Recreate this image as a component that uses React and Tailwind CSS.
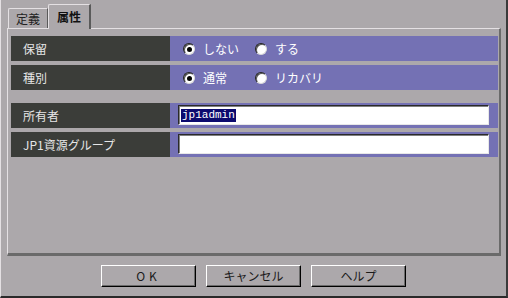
import React from "react";

const jp = { fontFamily: '"Noto Sans CJK JP", "Noto Sans", sans-serif' };

function Radio({ checked, label, width }) {
  return (
    <div className={`flex items-center ${width}`}>
      <span className="relative w-[12px] h-[12px] rounded-full bg-white border border-t-[#202020] border-l-[#202020] border-r-[#d8d8d8] border-b-[#d8d8d8] shadow-[inset_1px_1px_0_#555]">
        {checked && (
          <span className="absolute left-[3px] top-[3px] w-[5px] h-[5px] rounded-full bg-black" />
        )}
      </span>
      <span className="ml-[8px] text-[12px] text-white leading-none">{label}</span>
    </div>
  );
}

function Row({ label, children, className = "" }) {
  return (
    <div className={`flex h-[25px] ${className}`}>
      <div className="w-[159px] bg-[#3b3d39] flex items-center pl-[12px] text-[12px] text-[#e6e6e6]">
        {label}
      </div>
      <div className="flex-1 bg-[#7471b4] flex items-center">{children}</div>
    </div>
  );
}

function TextInput({ value }) {
  return (
    <div className="ml-[8px] mr-[9px] mt-[-1px] flex-1 h-[20px] bg-white border border-t-[#2a2a2a] border-l-[#2a2a2a] border-r-[#e8e8e8] border-b-[#e8e8e8] shadow-[inset_1px_1px_0_#808080] flex items-center pl-[2px]">
      {value && (
        <span
          className="bg-[#0c0a6e] text-white text-[11px] leading-[13px] px-[1px]"
          style={{ fontFamily: '"Liberation Mono", monospace' }}
        >
          {value}
        </span>
      )}
    </div>
  );
}

function Button({ children, spaced }) {
  return (
    <button
      className={`w-[95px] h-[22px] bg-[#aca8ab] border border-t-white border-l-white border-r-black border-b-black shadow-[inset_-1px_-1px_0_#6b6b6b] text-[12px] text-[#1a1a1a] ${spaced ? "tracking-[4px]" : ""}`}
    >
      {children}
    </button>
  );
}

export default function App() {
  return (
    <div
      className="w-[508px] h-[298px] bg-[#aca8ab] border-l border-l-[#e4e0e3] border-r-2 border-r-[#3a3a3a] border-b-2 border-b-[#2a2a2a] flex flex-col pl-[6px]"
      style={jp}
    >
      {/* Tabs */}
      <div className="h-[28px] flex items-end pl-[1px]">
        <div className="w-[40px] h-[20px] border-t border-l border-t-[#e4e0e3] border-l-[#e4e0e3] border-r border-r-[#5a5a5a] rounded-tl-[2px] flex items-center justify-center text-[12px] text-[#222]">
          定義
        </div>
        <div className="w-[43px] h-[25px] mb-[-1px] bg-[#aca8ab] relative z-10 border-t border-l border-t-[#e4e0e3] border-l-[#e4e0e3] border-r-2 border-r-[#5a5a5a] rounded-tl-[2px] flex items-center justify-center text-[12px] font-bold text-[#111] pb-[1px]">
          属性
        </div>
      </div>

      {/* Panel */}
      <div className="w-[494px] h-[228px] border-t border-l border-t-[#e4e0e3] border-l-[#e4e0e3] border-r-2 border-r-[#6a6a6a] border-b-[3px] border-b-[#6a6a6a] pl-[3px] pr-[1px] pt-[7px] flex flex-col">
        <Row label="保留">
          <div className="flex items-center pl-[13px]">
            <Radio checked label="しない" width="w-[72px]" />
            <Radio label="する" />
          </div>
        </Row>
        <Row label="種別" className="mt-[4px]">
          <div className="flex items-center pl-[13px]">
            <Radio checked label="通常" width="w-[72px]" />
            <Radio label="リカバリ" />
          </div>
        </Row>
        <Row label="所有者" className="mt-[13px]">
          <TextInput value="jp1admin" />
        </Row>
        <Row label="JP1資源グループ" className="mt-[4px]">
          <TextInput />
        </Row>
      </div>

      {/* Buttons */}
      <div className="flex justify-center gap-[10px] mt-[9px] pr-[6px]">
        <Button spaced>OK</Button>
        <Button>キャンセル</Button>
        <Button>ヘルプ</Button>
      </div>
    </div>
  );
}
